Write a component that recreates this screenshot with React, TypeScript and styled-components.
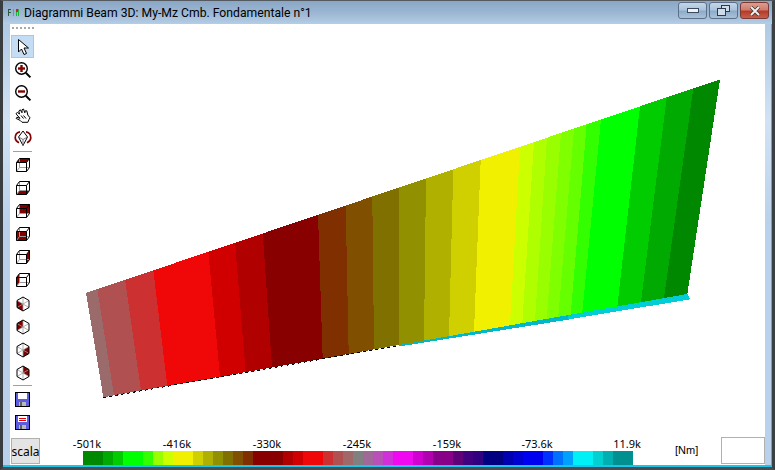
import React from 'react';
import styled, {createGlobalStyle} from 'styled-components';

const bands = [
  {color: '#9b6b6b', top: 86, bottom: 103.3},
  {color: '#b05050', top: 97.3, bottom: 114},
  {color: '#cc3030', top: 125, bottom: 141},
  {color: '#f00808', top: 153.3, bottom: 167.3},
  {color: '#d00000', top: 208.3, bottom: 220},
  {color: '#b00000', top: 235, bottom: 245.7},
  {color: '#880000', top: 262.7, bottom: 272},
  {color: '#803000', top: 318, bottom: 322.7},
  {color: '#805000', top: 345.7, bottom: 348.7},
  {color: '#807000', top: 372.3, bottom: 374},
  {color: '#909000', top: 399, bottom: 399},
  {color: '#b0b000', top: 426, bottom: 424},
  {color: '#d0d000', top: 453.3, bottom: 449},
  {color: '#f0f000', top: 480.7, bottom: 474},
  {color: '#ccff00', top: 520, bottom: 510},
  {color: '#b0ff00', top: 534, bottom: 522.3},
  {color: '#99ff00', top: 547, bottom: 535},
  {color: '#7fff00', top: 561, bottom: 546.7},
  {color: '#66ff00', top: 574, bottom: 558.3},
  {color: '#33ff00', top: 586.7, bottom: 570.7},
  {color: '#00ff00', top: 601, bottom: 582.3},
  {color: '#00cc00', top: 640, bottom: 617.3},
  {color: '#00aa00', top: 666.7, bottom: 641},
  {color: '#008800', top: 693.3, bottom: 664},
];

const TOP_END = 720;
const BOTTOM_END = 687.3;

// top edge and bottom edge of the beam, in page pixels
const topY = (x: number) => 293 - ((x - 86) * 213.6) / 634;
const bottomY = (x: number) => 397.3 - ((x - 103.3) * 103.3) / 584;

const scale: [string, number][] = [
  ['#008800', 2], ['#00aa00', 1], ['#00cc00', 1], ['#00ff00', 2], ['#33ff00', 1],
  ['#99ff00', 1], ['#ccff00', 1], ['#f0f000', 2], ['#d0d000', 1], ['#b0b000', 1],
  ['#909000', 1], ['#807000', 1], ['#805000', 1], ['#803000', 1], ['#880000', 3],
  ['#b00000', 1], ['#d00000', 1], ['#f00808', 2], ['#cc3030', 1], ['#b05050', 1],
  ['#a06868', 1], ['#808080', 1], ['#a06898', 1], ['#b850b8', 1], ['#d030d8', 1],
  ['#f008f0', 2], ['#d000d0', 1], ['#b000b0', 1], ['#880088', 2], ['#600078', 1],
  ['#400080', 1], ['#300080', 1], ['#000080', 2], ['#0000b0', 1], ['#0000d0', 1],
  ['#0000f0', 2], ['#0030ff', 1], ['#0070ff', 1], ['#00a0ff', 1], ['#00f0f8', 2],
  ['#00d0d0', 1], ['#00b0b0', 1], ['#009090', 2],
];

const labels = ['-501k', '-416k', '-330k', '-245k', '-159k', '-73.6k', '11.9k'];

const GlobalStyle = createGlobalStyle`
  html, body {
    margin: 0;
    padding: 0;
    overflow: hidden;
    background: #fff;
  }
`;

const Window = styled.div`
  width: 775px;
  height: 470px;
  box-sizing: border-box;
  display: flex;
  flex-direction: column;
  background: #b9d1ea;
  border-top: 1px solid #555a60;
  border-left: 3px solid #3a3d40;
  border-right: 3px solid #3a4044;
  border-bottom: 3px solid #4a4d50;
  font-family: 'Noto Sans', sans-serif;
`;

const TitleBar = styled.div`
  height: 23px;
  flex: none;
  display: flex;
  align-items: center;
  padding-left: 5px;
  background: linear-gradient(180deg, #8aa7c6 0%, #9db8d4 55%, #b5cde6 100%);
`;

const TitleText = styled.span`
  margin-left: 4px;
  font-family: Roboto, sans-serif;
  font-size: 12.2px;
  color: #000;
  white-space: nowrap;
`;

const Controls = styled.div`
  margin-left: auto;
  margin-right: 3px;
  margin-bottom: 4px;
  display: flex;
  gap: 2px;
`;

const ControlButton = styled.div<{$close?: boolean}>`
  width: 29px;
  height: 17px;
  box-sizing: border-box;
  display: flex;
  align-items: center;
  justify-content: center;
  border: 1px solid ${p => (p.$close ? '#7a3a34' : '#5d6f86')};
  border-radius: 3px;
  background: ${p =>
    p.$close
      ? 'linear-gradient(180deg, #dd9c90 0%, #cf7c6e 45%, #b83a28 55%, #c4604c 100%)'
      : 'linear-gradient(180deg, #c4d6e8 0%, #aac3db 45%, #8dabc9 55%, #a9c2da 100%)'};
`;

const Frame = styled.div`
  flex: 1;
  display: flex;
  min-height: 0;
  padding: 0 6px 0 7px;
  background: linear-gradient(180deg, #b0cae4 0%, #d2e2f4 22%, #b9d1ea 45%, #b9d1ea 100%);
  border-right: 1px solid #1cc4e8;
  border-bottom: 2px solid #1cc4e8;
`;

const Client = styled.div`
  flex: 1;
  display: flex;
  flex-direction: column;
  background: #fff;
  min-width: 0;
`;

const Main = styled.div`
  height: 413px;
  flex: none;
  display: flex;
`;

const Toolbar = styled.div`
  width: 33px;
  flex: none;
  box-sizing: border-box;
  padding: 3px 0 0 1px;
  display: flex;
  flex-direction: column;
`;

const Gripper = styled.div`
  width: 22px;
  height: 2px;
  margin: 0 0 6px 1px;
  background: repeating-linear-gradient(90deg, #a8a8a8 0 2px, transparent 2px 4px);
`;

const ToolButton = styled.div<{$active?: boolean; $low?: boolean}>`
  width: 23px;
  height: 23px;
  box-sizing: border-box;
  flex: none;
  display: flex;
  align-items: center;
  justify-content: center;
  padding-top: ${p => (p.$low ? '2px' : '0')};
  border: 1px solid ${p => (p.$active ? '#9ecbef' : 'transparent')};
  background: ${p => (p.$active ? '#c4dcf4' : 'transparent')};
`;

const Separator = styled.div<{$wide?: boolean}>`
  width: 19px;
  height: 1px;
  flex: none;
  margin: ${p => (p.$wide ? '2px' : '1px')} 0 ${p => (p.$wide ? '2px' : '1px')} 2px;
  background: #a0a0a0;
`;

const Canvas = styled.svg`
  flex: 1;
  min-width: 0;
  height: 413px;
  display: block;
`;

const BottomBar = styled.div`
  flex: 1;
  display: flex;
  align-items: stretch;
  padding: 0 0 1px 1px;
`;

const ScaleButton = styled.div`
  width: 29px;
  height: 26px;
  margin-top: 1px;
  box-sizing: border-box;
  display: flex;
  align-items: center;
  justify-content: center;
  background: #e4e4e4;
  border: 1px solid #b0b0b0;
  font-size: 12px;
  color: #000;
`;

const Legend = styled.div`
  width: 640px;
  flex: none;
  margin-left: 2px;
  display: flex;
  flex-direction: column;
`;

const LegendLabels = styled.div`
  display: flex;
  height: 14px;
`;

const LegendLabel = styled.span`
  width: 90px;
  flex: none;
  text-align: center;
  font-size: 11px;
  line-height: 14px;
  color: #000;
`;

const LegendBar = styled.div`
  display: flex;
  height: 14px;
  margin-left: 41px;
`;

const LegendSwatch = styled.div<{$color: string; $span: number}>`
  width: ${p => p.$span * 10}px;
  flex: none;
  background: ${p => p.$color};
`;

const Unit = styled.span`
  font-family: 'Liberation Sans', sans-serif;
  font-size: 11px;
  line-height: 27px;
  margin-left: -7px;
  color: #000;
`;

const ValueBox = styled.div`
  width: 44px;
  height: 27px;
  box-sizing: border-box;
  margin-left: auto;
  background: #fff;
  border: 1px solid #b0b0b0;
`;

const AppIcon = () => (
  <svg width="12" height="9" viewBox="0 0 12 9" shapeRendering="crispEdges">
    <path d="M0 1h3v1H1v2h2v1H1v3H0z" fill="#2a5a3a" />
    <path d="M5 1h1v7H5z" fill="#10c8a0" />
    <path d="M8 1h2v3H8z" fill="#d02020" />
    <path d="M10 1h1v7h-1zM8 4h1v4H8z" fill="#20b040" />
  </svg>
);

const Arrow = () => (
  <svg width="16" height="18" viewBox="0 0 16 18">
    <path d="M3.5 1.5V14l3-3 2.5 5.5 2.5-1L9 10h4.5z" fill="#fff" stroke="#000" strokeWidth="1" />
  </svg>
);

const Magnifier = ({plus}: {plus?: boolean}) => (
  <svg width="18" height="18" viewBox="0 0 18 18">
    <circle cx="7.5" cy="7.5" r="5.8" fill="#fff" stroke="#000" strokeWidth="1.4" />
    <path d="M4 6.3h7v2.4H4z" fill="#800000" />
    {plus && <path d="M6.3 4h2.4v7H6.3z" fill="#800000" />}
    <path d="M11.8 11.8l4.6 4.6" stroke="#000" strokeWidth="2" />
  </svg>
);

const Hand = () => (
  <svg width="16" height="15" viewBox="0 0 16 15" fill="#fff" stroke="#000" strokeWidth="1">
    <path d="M2 7L1 5.500 2.500 4.500 4.500 6 3.800 3 5.300 1.800 7 4.800 7 1.800 8.500 1 9.800 4.800 10.300 2.800 11.800 2.800 12.800 7 15 9.800 14 11.500 12.800 14.300H7L5 12.300 1.200 10.500 1.800 9.300 5 10.300z" />
    <path d="M8.500 7.500l2.500 3M6 7.500l2.500 3" fill="none" />
  </svg>
);

const Rotate = () => (
  <svg width="18" height="17" viewBox="0 0 18 17" fill="none">
    <path d="M9 1l4.500 6L9 15.500 4.500 7z" fill="#fff" stroke="#000" />
    <path d="M4.500 7L9 9.500l4.500-2.500M9 9.500v6" stroke="#777" />
    <path d="M6 1.800C3 2 1 5 1.200 8c.2 2.300 1.800 4 3.800 4.800M12 1.800c3 .2 5 3.200 4.800 6.200-.2 2.300-1.800 4-3.800 4.800" stroke="#800000" strokeWidth="1.700" />
  </svg>
);

type Face = 'top' | 'bottom' | 'back' | 'front' | 'right' | 'left';

const cubeFaces: Record<Face, string> = {
  top: '1.5,5.5 4.5,1.5 14.5,1.5 11.5,5.5',
  bottom: '1.5,14.5 4.5,10.5 14.5,10.5 11.5,14.5',
  back: '4.5,1.5 14.5,1.5 14.5,10.5 4.5,10.5',
  front: '1.5,5.5 11.5,5.5 11.5,14.5 1.5,14.5',
  right: '11.5,5.5 14.5,1.5 14.5,10.5 11.5,14.5',
  left: '1.5,5.5 4.5,1.5 4.5,10.5 1.5,14.5',
};

const Cube = ({face}: {face: Face}) => (
  <svg width="16" height="16" viewBox="0 0 16 16">
    <polygon points="1.5,5.5 4.5,1.5 14.5,1.5 14.5,10.5 11.5,14.5 1.5,14.5" fill="#fff" />
    <polygon points={cubeFaces[face]} fill="#800000" />
    <path d="M4.500 1.500v9h10M4.500 10.500l-3 4" fill="none" stroke="#9a9a9a" />
    <path d="M1.500 5.500h10v9h-10zM1.500 5.500l3-4h10v9l-3 4M11.500 5.500l3-4" fill="none" stroke="#000" />
  </svg>
);

type IsoFace = 'lowerLeft' | 'upperLeft' | 'lowerRight' | 'upperRight';

const isoFaces: Record<IsoFace, string> = {
  lowerLeft: '2,4.5 8,8 8,15 2,11.5',
  upperLeft: '2,4.5 8,1 8,8 2,11.5',
  lowerRight: '14,4.5 8,8 8,15 14,11.5',
  upperRight: '8,1 14,4.5 14,11.5 8,8',
};

const IsoCube = ({face}: {face: IsoFace}) => (
  <svg width="16" height="16" viewBox="0 0 16 16">
    <polygon points="8,1 14,4.5 14,11.5 8,15 2,11.5 2,4.5" fill="#fff" />
    <polygon points={isoFaces[face]} fill="#800000" />
    <path d="M8 1v14M2 4.500l12 7M14 4.500l-12 7" fill="none" stroke="#a0a0a0" strokeWidth="0.8" />
    <polygon points="8,1 14,4.5 14,11.5 8,15 2,11.5 2,4.5" fill="none" stroke="#000" />
  </svg>
);

const Disk = ({marked}: {marked?: boolean}) => (
  <svg width="15" height="15" viewBox="0 0 15 15" shapeRendering="crispEdges">
    <path d="M.5.500h14v14H.5z" fill="#5c5ce0" stroke="#000" />
    <path d="M3 1h9v6H3z" fill="#fff" />
    <path d="M4 10h7v4H4z" fill="#b8b8b8" />
    <path d="M5 10h2v4H5z" fill="#606060" />
    {marked && <path d="M4 2.500h7v1H4zM4 4.500h7v1H4z" fill="#e00000" />}
  </svg>
);

const App: React.FC = () => {
  const polys = bands.map((band, i) => {
    const nextTop = i + 1 < bands.length ? bands[i + 1].top : TOP_END;
    const nextBottom = i + 1 < bands.length ? bands[i + 1].bottom : BOTTOM_END;
    return (
      <polygon
        key={band.top}
        fill={band.color}
        points={`${band.top},${topY(band.top)} ${nextTop},${topY(nextTop)} ${nextBottom},${bottomY(nextBottom)} ${band.bottom},${bottomY(band.bottom)}`}
      />
    );
  });

  return (
    <Window>
      <GlobalStyle />
      <TitleBar>
        <AppIcon />
        <TitleText>Diagrammi Beam 3D: My-Mz Cmb. Fondamentale n°1</TitleText>
        <Controls>
          <ControlButton>
            <svg width="12" height="5" viewBox="0 0 12 5">
              <rect x="0.5" y="0.5" width="11" height="4" fill="#eef2f6" stroke="#3a4a5c" />
            </svg>
          </ControlButton>
          <ControlButton>
            <svg width="13" height="11" viewBox="0 0 13 11" fill="#cfdbe8" stroke="#2a3a4c">
              <rect x="4.5" y="0.5" width="8" height="6" />
              <rect x="0.5" y="3.5" width="8" height="7" />
            </svg>
          </ControlButton>
          <ControlButton $close>
            <svg width="12" height="10" viewBox="0 0 12 10">
              <path d="M2 1l8 8M10 1L2 9" stroke="#3c3030" strokeWidth="3.4" />
              <path d="M2 1l8 8M10 1L2 9" stroke="#f4f0ee" strokeWidth="2" />
            </svg>
          </ControlButton>
        </Controls>
      </TitleBar>
      <Frame>
        <Client>
          <Main>
            <Toolbar>
              <Gripper />
              <ToolButton $active><Arrow /></ToolButton>
              <ToolButton><Magnifier plus /></ToolButton>
              <ToolButton><Magnifier /></ToolButton>
              <ToolButton><Hand /></ToolButton>
              <ToolButton><Rotate /></ToolButton>
              <Separator />
              <ToolButton><Cube face="top" /></ToolButton>
              <ToolButton><Cube face="bottom" /></ToolButton>
              <ToolButton><Cube face="back" /></ToolButton>
              <ToolButton><Cube face="front" /></ToolButton>
              <ToolButton><Cube face="right" /></ToolButton>
              <ToolButton><Cube face="left" /></ToolButton>
              <ToolButton $low><IsoCube face="lowerLeft" /></ToolButton>
              <ToolButton $low><IsoCube face="upperLeft" /></ToolButton>
              <ToolButton $low><IsoCube face="lowerRight" /></ToolButton>
              <ToolButton $low><IsoCube face="upperRight" /></ToolButton>
              <Separator $wide />
              <ToolButton><Disk /></ToolButton>
              <ToolButton><Disk marked /></ToolButton>
            </Toolbar>
            <Canvas viewBox="43 24 722 413" preserveAspectRatio="xMinYMin meet" shapeRendering="crispEdges">
              <polygon points="399,345 568,315 569,319.5 399,346.5" fill="#00b8c8" />
              <polygon points="568,315 687.3,294 690,299.3 568,319.5" fill="#00cdd6" />
              {polys}
              <line x1="103.3" y1="397.5" x2="399" y2="345.5" stroke="#000" strokeDasharray="3 3" />
            </Canvas>
          </Main>
          <BottomBar>
            <ScaleButton>scala</ScaleButton>
            <Legend>
              <LegendLabels>
                {labels.map(label => (
                  <LegendLabel key={label}>{label}</LegendLabel>
                ))}
              </LegendLabels>
              <LegendBar>
                {scale.map(([color, span], i) => (
                  <LegendSwatch key={i} $color={color} $span={span} />
                ))}
              </LegendBar>
            </Legend>
            <Unit>[Nm]</Unit>
            <ValueBox />
          </BottomBar>
        </Client>
      </Frame>
    </Window>
  );
};

export default App;
